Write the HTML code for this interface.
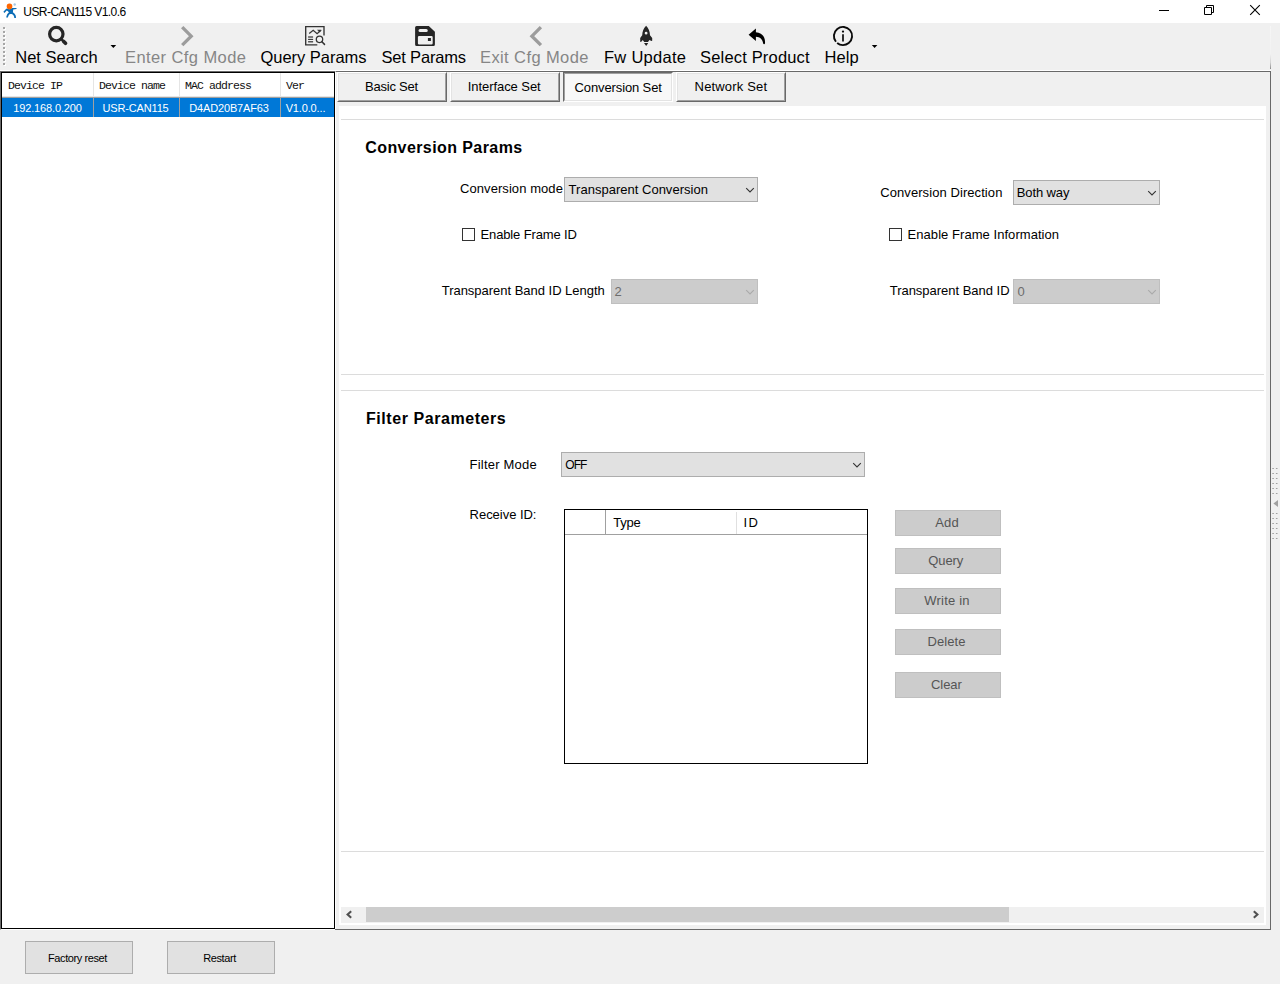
<!DOCTYPE html>
<html lang="en">
<head>
<meta charset="utf-8">
<title>USR-CAN115 V1.0.6</title>
<style>
*{box-sizing:border-box;margin:0;padding:0}
html,body{width:1280px;height:984px;overflow:hidden;background:#f0f0f0}
body{position:relative;font-family:"Liberation Sans",sans-serif;font-size:13px;color:#000}
.abs,.abs *{position:absolute}
#app{position:absolute;left:0;top:0;width:1280px;height:984px;overflow:hidden;background:#f0f0f0}
#app div,#app span,#app svg{position:absolute;white-space:nowrap}
/* title bar */
#titlebar{left:0;top:0;width:1280px;height:23px;background:#fff}
#title{left:23.3px;top:5px;font-size:12px;line-height:14px;letter-spacing:-0.56px;color:#000}
/* toolbar */
#toolbar{left:0;top:23px;width:1271px;height:48px;background:#f0f0f0;border-bottom:1px solid #fff}
.tb{font-size:16.5px;line-height:20px;top:24px;color:#000}
.tb.dis{color:#868686}
/* list */
#listouter{left:0;top:71px;width:336px;height:859px;border:1px solid;border-color:#696969 #fff #fff #696969}
#list{left:0;top:0;width:334px;height:857px;border:1px solid #000;background:#fff}
.hd{font-family:"Liberation Mono",monospace;font-size:11.5px;letter-spacing:-0.9px;line-height:14px;top:6px;color:#111}
.cell{top:25px;height:19px;line-height:20px;font-size:11px;letter-spacing:-0.15px;color:#fff;text-align:center;overflow:hidden}
/* tabs */
.tab{top:72px;width:110px;height:30px;background:#f0f0f0;border:1px solid;border-color:#fff #696969 #696969 #fff;text-align:center}
.tab i{left:0;top:0;right:0;bottom:0;border:1px solid;border-color:#e3e3e3 #a0a0a0 #a0a0a0 #e3e3e3;position:absolute}
.tab span{left:0;width:108px;top:6px;line-height:16px;font-size:13px;font-style:normal}
.tab.sel{background:#f8f8f8;border-color:#696969 #fff #fff #696969}
.tab.sel i{border-color:#a0a0a0 #e3e3e3 #e3e3e3 #a0a0a0}
.tab.sel span{left:1px;top:7px}
/* content */
#page{left:339px;top:106px;width:927px;height:819px;background:#fff}
.hr{left:2px;width:923px;height:1px;background:#dcdcdc}
.h{font-weight:bold;font-size:16px;line-height:20px;letter-spacing:0.3px}
.lb{font-size:13px;line-height:16px}
.combo{height:25px;background:#e1e1e1;border:1px solid #adadad;font-size:13px;line-height:23px;padding-left:3px}
.combo.dis{background:#ccc;border-color:#bfbfbf;color:#6d6d6d}
.cb{width:13px;height:13px;border:1px solid #333;background:#fff}
.btn{left:556px;width:106px;height:26px;background:#ccc;border:1px solid #bfbfbf;color:#555;text-align:center;line-height:24px;font-size:13px}
.t{font-size:13px;line-height:16px}
.t.b{font-weight:bold;font-size:16px;line-height:20px}
.t.s{font-size:12px}
.t.g{color:#555}
.t.d{color:#6d6d6d}
.wbtn{top:941px;width:108px;height:33px;background:#e1e1e1;border:1px solid #adadad;text-align:center;line-height:33px;font-size:11px;letter-spacing:-0.4px;padding-right:3px}
</style>
</head>
<body>
<div id="app">
<div id="titlebar">
<svg style="left:0;top:0" width="22" height="22" viewBox="0 0 22 22">
<path d="M12 8 L16.3 7.9 Q17.1 8.5 16.3 9.1 L13.2 9.6 L12.9 12.3 Q15 13.6 15.6 15.2 Q16 16.5 16 17.9 L14.3 18 Q14.3 16.5 13.6 15.4 Q12.8 14.2 11.6 14 L10.5 13.9 Q9.5 14 9 14.7 Q8.1 16 7.9 17.6 L6.2 17.6 Q6.3 15.8 7.2 14.2 Q7.9 13.1 8.9 12.5 L8 11.2 L6.8 10.5 L4.4 12.9 L3.4 11.7 L6.2 8.8 L7.2 8.6 Q9.5 10 12 8 Z" fill="#0c6db6"/>
<circle cx="9.5" cy="6.4" r="2.8" fill="#ff6600"/>
<circle cx="14.7" cy="4.5" r="1.2" fill="#a4c9e6"/>
</svg>
<span id="title">USR-CAN115 V1.0.6</span>
<svg style="left:1150px;top:0" width="130" height="23" viewBox="0 0 130 23" fill="none" stroke="#000" stroke-width="1">
<path d="M9 10.5 H19"/>
<path d="M54.5 7.5 H61.5 V14.5 H54.5 Z"/>
<path d="M56.5 7.5 V5.5 H63.5 V12.5 H61.5"/>
<path d="M100.2 5.2 L109.8 14.8 M109.8 5.2 L100.2 14.8" stroke-width="1.1"/>
</svg>
</div>
<div id="toolbar">
<svg style="left:0;top:0" width="960" height="48" viewBox="0 23 960 48">
<g fill="#fff"><rect x="4" y="28" width="2" height="2"/><rect x="4" y="32" width="2" height="2"/><rect x="4" y="36" width="2" height="2"/><rect x="4" y="40" width="2" height="2"/><rect x="4" y="44" width="2" height="2"/><rect x="4" y="48" width="2" height="2"/><rect x="4" y="52" width="2" height="2"/><rect x="4" y="56" width="2" height="2"/><rect x="4" y="60" width="2" height="2"/><rect x="4" y="64" width="2" height="2"/></g><g fill="#a6a6a6"><rect x="3" y="27" width="2" height="2"/><rect x="3" y="31" width="2" height="2"/><rect x="3" y="35" width="2" height="2"/><rect x="3" y="39" width="2" height="2"/><rect x="3" y="43" width="2" height="2"/><rect x="3" y="47" width="2" height="2"/><rect x="3" y="51" width="2" height="2"/><rect x="3" y="55" width="2" height="2"/><rect x="3" y="59" width="2" height="2"/><rect x="3" y="63" width="2" height="2"/></g>
<!-- search -->
<circle cx="56.3" cy="34.1" r="6.7" fill="none" stroke="#262626" stroke-width="3.2"/>
<path d="M61 38.8 L64 41.8" stroke="#262626" stroke-width="2.4"/>
<path d="M63.7 41.5 L65.5 43.3" stroke="#262626" stroke-width="3.7" stroke-linecap="round"/>
<path d="M110.5 45 H116.2 L113.35 48 Z" fill="#000"/>
<!-- chevron right -->
<path d="M182.2 27.2 L191.2 36.2 L182.2 45.2" fill="none" stroke="#9c9c9c" stroke-width="3.3"/>
<!-- query params -->
<g fill="none" stroke="#333" stroke-width="1.35">
<path d="M317.3 44.8 H305.7 V26.65 H324 V35.6"/>
<path d="M309.2 33.6 L313.2 30.3 L317.1 33.7 L320.4 30.8" stroke-width="1.25"/>
<path d="M317.6 30.1 H321.3 L319.6 32 Z" fill="#333" stroke-width="0.6"/>
<path d="M308.1 36.9 H313.1 M308.1 41.8 H313.1" stroke="#555" stroke-width="1.5"/>
<path d="M308.1 39.4 H313.1" stroke-width="1.1"/>
<circle cx="319.5" cy="39.35" r="3.2" stroke-width="1.3"/>
<path d="M321.9 41.8 L324.5 44.4" stroke-width="1.5" stroke-linecap="round"/>
</g>
<!-- save -->
<path fill-rule="evenodd" fill="#262626" d="M416.6 25.9 H428.8 L434.9 31.8 V44.6 A1.5 1.5 0 0 1 433.4 46.1 H416.6 A1.5 1.5 0 0 1 415.1 44.6 V27.4 A1.5 1.5 0 0 1 416.6 25.9 Z M420.1 28.9 A1.6 1.6 0 0 0 420.1 32.1 H426.2 A1.6 1.6 0 0 0 426.2 28.9 Z M419.1 36 A1.2 1.2 0 0 0 417.9 37.2 V43.2 A1.2 1.2 0 0 0 419.1 44.4 H431.5 A1.2 1.2 0 0 0 432.7 43.2 V37.2 A1.2 1.2 0 0 0 431.5 36 Z M427.9 38 H430.9 V41 H427.9 Z"/>
<!-- chevron left -->
<path d="M540.9 27.2 L531.9 36.2 L540.9 45.2" fill="none" stroke="#9c9c9c" stroke-width="3.3"/>
<!-- rocket -->
<path fill="#262626" fill-rule="evenodd" d="M646.1 25.8 C648.6 28.4 649.9 31.5 650 35.2 L652.2 38 V40.7 L651.5 41 L649.4 39.9 L648 42 H644.2 L642.8 39.9 L641 41.9 L640.2 41.7 V38 L642.2 35.2 C642.3 31.5 643.6 28.4 646.1 25.8 Z M646.1 31.75 A1.4 1.4 0 1 0 646.1 34.55 A1.4 1.4 0 1 0 646.1 31.75 Z"/>
<path fill="#262626" d="M644 43 H648.2 L646.2 46.1 Z"/>
<!-- reply -->
<path fill="#000" d="M755.9 28.5 L748.6 34.8 L755.9 41.1 V36.8 C760 36.9 762.5 39.3 763.1 43.2 C763.3 44.5 764.9 44.5 765 43.2 C765.5 37 761.8 32.4 755.9 32.2 Z"/>
<!-- info -->
<circle cx="843" cy="36" r="9.1" fill="none" stroke="#0a0a0a" stroke-width="1.9" stroke-dasharray="55 2.2" transform="rotate(141 843 36)"/>
<circle cx="843" cy="31.6" r="1.15" fill="#0a0a0a"/>
<path d="M843 34.2 V41.6" stroke="#0a0a0a" stroke-width="1.7"/>
<path d="M871.8 45 H877.4 L874.6 48 Z" fill="#000"/>
</svg>
<span class="tb" style="left:15.3px;letter-spacing:-0.016px">Net Search</span>
<span class="tb dis" style="left:125.0px;letter-spacing:0.418px">Enter Cfg Mode</span>
<span class="tb" style="left:260.5px;letter-spacing:-0.034px">Query Params</span>
<span class="tb" style="left:381.5px;letter-spacing:-0.189px">Set Params</span>
<span class="tb dis" style="left:480.0px;letter-spacing:0.398px">Exit Cfg Mode</span>
<span class="tb" style="left:604.0px;letter-spacing:0.275px">Fw Update</span>
<span class="tb" style="left:700.0px;letter-spacing:0.176px">Select Product</span>
<span class="tb" style="left:824.6px;letter-spacing:0.071px">Help</span>
</div>
<div id="listouter"><div id="list">
<div style="left:0;top:0;width:332px;height:24px;background:#fff;border-bottom:1px solid #e5e5e5"></div>
<div style="left:0;top:24px;width:332px;height:20px;background:#0078d7"></div>
<div style="left:91px;top:0;width:1px;height:24px;background:#e5e5e5"></div>
<div style="left:177px;top:0;width:1px;height:24px;background:#e5e5e5"></div>
<div style="left:278px;top:0;width:1px;height:24px;background:#e5e5e5"></div>
<div style="left:91px;top:24px;width:1px;height:20px;background:#a0a0a0"></div>
<div style="left:177px;top:24px;width:1px;height:20px;background:#a0a0a0"></div>
<div style="left:278px;top:24px;width:1px;height:20px;background:#a0a0a0"></div>
<div style="left:0;top:24px;width:332px;height:1px;background:#a0a0a0"></div>
<span class="hd" style="left:6px">Device IP</span>
<span class="hd" style="left:97px">Device name</span>
<span class="hd" style="left:183px">MAC address</span>
<span class="hd" style="left:284px">Ver</span>
<div class="cell" style="left:0;width:91px">192.168.0.200</div>
<div class="cell" style="left:91px;width:85px">USR-CAN115</div>
<div class="cell" style="left:177px;width:100px">D4AD20B7AF63</div>
<div class="cell" style="left:277px;width:53px">V1.0.0...</div>
</div></div>
<div style="left:1270px;top:26px;width:1px;height:43px;background:linear-gradient(#f6f6f6 0%,#f2f2f2 65%,#d2d2d2 85%,#8a8a8a 100%)"></div>
<div id="tabline" style="left:336px;top:71px;width:935px;height:1px;background:#696969"></div>
<div id="tabright" style="left:1270px;top:71px;width:1px;height:859px;background:#696969"></div>
<div id="tabbottom" style="left:335px;top:929px;width:936px;height:1px;background:#696969"></div>
<div class="tab" style="left:337px"><i></i></div>
<div class="tab" style="left:450px"><i></i></div>
<div class="tab sel" style="left:563px"><i></i></div>
<div class="tab" style="left:676px"><i></i></div>
<div id="page">
<div class="hr" style="top:13px"></div>
<div class="hr" style="top:268px"></div>
<div class="hr" style="top:284px"></div>
<div class="hr" style="top:745px"></div>
<div class="combo" style="left:225px;top:71px;width:194px"><svg style="left:180px;top:9px" width="10" height="6" viewBox="0 0 10 6"><path d="M1.2 1.2 L5 4.9 L8.8 1.2" fill="none" stroke="#333" stroke-width="1.1"/></svg></div>
<div class="combo" style="left:674px;top:74px;width:147px"><svg style="left:133px;top:9px" width="10" height="6" viewBox="0 0 10 6"><path d="M1.2 1.2 L5 4.9 L8.8 1.2" fill="none" stroke="#333" stroke-width="1.1"/></svg></div>
<div class="cb" style="left:123px;top:122px"></div>
<div class="cb" style="left:550px;top:122px"></div>
<div class="combo dis" style="left:272px;top:173px;width:147px"><svg style="left:133px;top:9px" width="10" height="6" viewBox="0 0 10 6"><path d="M1.2 1.2 L5 4.9 L8.8 1.2" fill="none" stroke="#aaa" stroke-width="1.1"/></svg></div>
<div class="combo dis" style="left:674px;top:173px;width:147px"><svg style="left:133px;top:9px" width="10" height="6" viewBox="0 0 10 6"><path d="M1.2 1.2 L5 4.9 L8.8 1.2" fill="none" stroke="#aaa" stroke-width="1.1"/></svg></div>
<div class="combo" style="left:222px;top:346px;width:304px"><svg style="left:290px;top:9px" width="10" height="6" viewBox="0 0 10 6"><path d="M1.2 1.2 L5 4.9 L8.8 1.2" fill="none" stroke="#333" stroke-width="1.1"/></svg></div>
<div id="tbl" style="left:225px;top:403px;width:304px;height:255px;border:1px solid #000;background:#fff">
<div style="left:0;top:24px;width:302px;height:1px;background:#a0a0a0"></div>
<div style="left:40px;top:0;width:1px;height:24px;background:#a0a0a0"></div>
<div style="left:171px;top:2px;width:1px;height:22px;background:#e0e0e0"></div>
</div>
<div class="btn" style="top:404px"></div>
<div class="btn" style="top:442px"></div>
<div class="btn" style="top:482px"></div>
<div class="btn" style="top:523px"></div>
<div class="btn" style="top:566px"></div>
<div id="hsb" style="left:2px;top:801px;width:923px;height:16px;background:#f0f0f0">
<div style="left:25px;top:0;width:643px;height:15px;background:#cdcdcd"></div>
<svg style="left:0;top:0" width="923" height="16" viewBox="0 0 923 16"><path d="M10.2 4.3 L6.6 7.5 L10.2 10.7 M912.8 4.3 L916.4 7.5 L912.8 10.7" fill="none" stroke="#505050" stroke-width="2.1"/></svg>
</div>
</div>
<div class="wbtn" style="left:25px">Factory reset</div>
<div class="wbtn" style="left:167px">Restart</div>
<svg style="left:1271px;top:460px" width="9" height="90" viewBox="0 0 9 90"><g fill="#a0a0a0"><g transform="translate(1.3,8)"><rect x="0" y="0" width="1.6" height="1"/><rect x="3.6" y="0" width="1.6" height="1"/><rect x="0" y="5" width="1.6" height="1"/><rect x="3.6" y="5" width="1.6" height="1"/><rect x="0" y="10" width="1.6" height="1"/><rect x="3.6" y="10" width="1.6" height="1"/><rect x="0" y="15" width="1.6" height="1"/><rect x="3.6" y="15" width="1.6" height="1"/><rect x="0" y="20" width="1.6" height="1"/><rect x="3.6" y="20" width="1.6" height="1"/><rect x="0" y="25" width="1.6" height="1"/><rect x="3.6" y="25" width="1.6" height="1"/></g><g transform="translate(1.3,53)"><rect x="0" y="0" width="1.6" height="1"/><rect x="3.6" y="0" width="1.6" height="1"/><rect x="0" y="5" width="1.6" height="1"/><rect x="3.6" y="5" width="1.6" height="1"/><rect x="0" y="10" width="1.6" height="1"/><rect x="3.6" y="10" width="1.6" height="1"/><rect x="0" y="15" width="1.6" height="1"/><rect x="3.6" y="15" width="1.6" height="1"/><rect x="0" y="20" width="1.6" height="1"/><rect x="3.6" y="20" width="1.6" height="1"/><rect x="0" y="25" width="1.6" height="1"/><rect x="3.6" y="25" width="1.6" height="1"/></g><path d="M7 40 L2.4 43.5 L7 47 Z"/></g></svg>
<span class="t" style="left:365.10px;top:79px;letter-spacing:-0.231px">Basic Set</span>
<span class="t" style="left:467.75px;top:79px;letter-spacing:-0.062px">Interface Set</span>
<span class="t" style="left:574.60px;top:80px;letter-spacing:-0.123px">Conversion Set</span>
<span class="t" style="left:694.60px;top:79px;letter-spacing:0.165px">Network Set</span>
<span class="t b" style="left:365.25px;top:138px;letter-spacing:0.416px">Conversion Params</span>
<span class="t b" style="left:365.90px;top:409px;letter-spacing:0.569px">Filter Parameters</span>
<span class="t" style="left:460.00px;top:181px;letter-spacing:0.071px">Conversion mode</span>
<span class="t" style="left:568.60px;top:182px;letter-spacing:0.014px">Transparent Conversion</span>
<span class="t" style="left:880.25px;top:185px;letter-spacing:0.076px">Conversion Direction</span>
<span class="t" style="left:1016.70px;top:185px;letter-spacing:-0.100px">Both way</span>
<span class="t" style="left:480.50px;top:227px;letter-spacing:-0.129px">Enable Frame ID</span>
<span class="t" style="left:907.60px;top:227px;letter-spacing:0.050px">Enable Frame Information</span>
<span class="t" style="left:441.70px;top:283px;letter-spacing:-0.020px">Transparent Band ID Length</span>
<span class="t d" style="left:614.60px;top:284px;letter-spacing:0.000px">2</span>
<span class="t" style="left:889.70px;top:283px;letter-spacing:-0.017px">Transparent Band ID</span>
<span class="t d" style="left:1017.50px;top:284px;letter-spacing:0.000px">0</span>
<span class="t" style="left:469.60px;top:457px;letter-spacing:0.200px">Filter Mode</span>
<span class="t s" style="left:565.30px;top:457px;letter-spacing:-1.000px">OFF</span>
<span class="t" style="left:469.60px;top:507px;letter-spacing:-0.030px">Receive ID:</span>
<span class="t" style="left:613.20px;top:515px;letter-spacing:-0.233px">Type</span>
<span class="t" style="left:743.40px;top:515px;letter-spacing:1.500px">ID</span>
<span class="t g" style="left:935.20px;top:515px;letter-spacing:0.150px">Add</span>
<span class="t g" style="left:928.20px;top:553px;letter-spacing:-0.075px">Query</span>
<span class="t g" style="left:924.30px;top:593px;letter-spacing:0.200px">Write in</span>
<span class="t g" style="left:927.50px;top:634px;letter-spacing:0.080px">Delete</span>
<span class="t g" style="left:931.00px;top:677px;letter-spacing:-0.062px">Clear</span>
</div>
</body>
</html>
